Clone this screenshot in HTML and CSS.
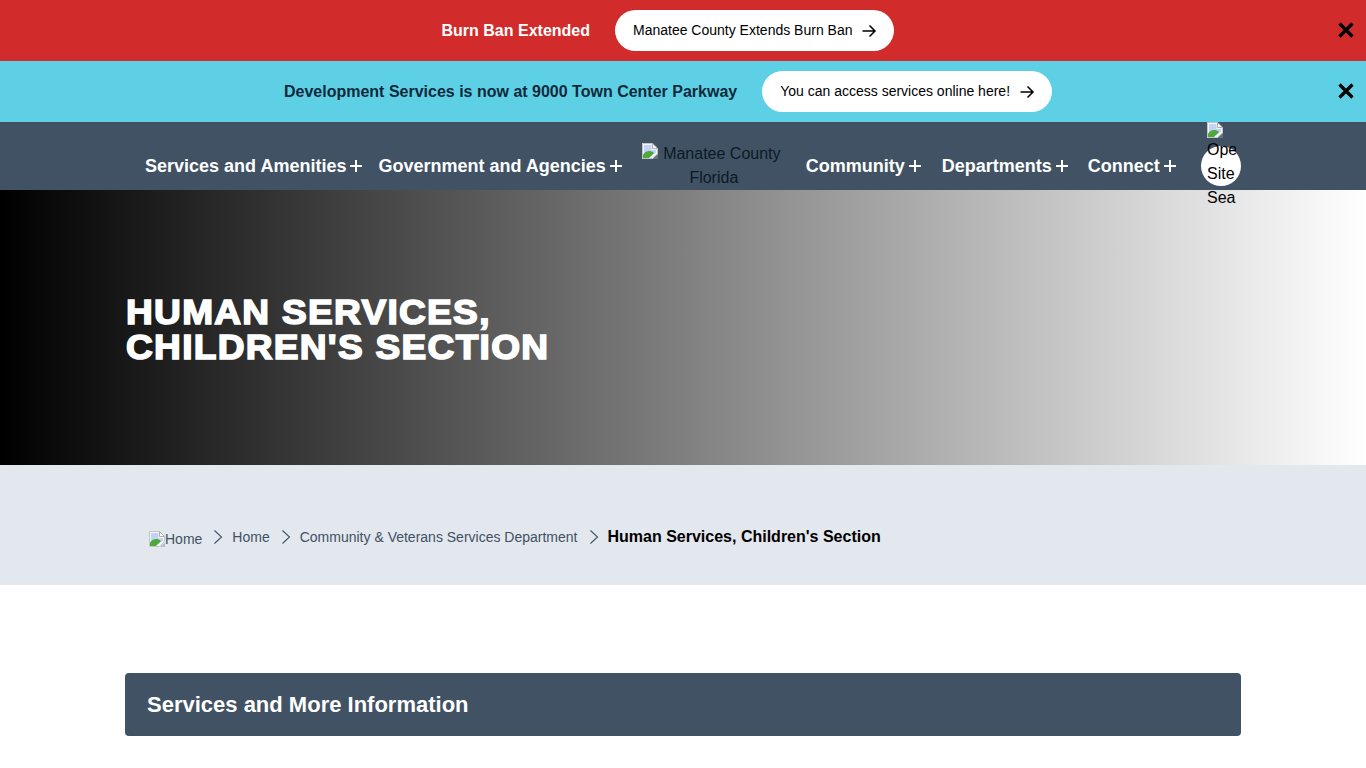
FILE: index.html
```html
<!DOCTYPE html>
<html lang="en">
<head>
<meta charset="utf-8">
<title>Human Services, Children's Section</title>
<link rel="stylesheet" href="styles.css">
</head>
<body>
<svg class="defs" width="0" height="0" aria-hidden="true">
  <symbol id="broken" viewBox="0 0 16 16">
    <path d="M0 0H10.5L16 5.5V11L10.5 16H0Z" fill="#f4f6fb"/>
    <path d="M0.5 0.5H10.5L15.5 5.5V10.8L10.3 15.5H0.5Z" fill="none" stroke="#c4c4c4"/>
    <path d="M10.5 0.5V5.5H15.5Z" fill="#fff" stroke="#b0b0b0"/>
    <path d="M2 2H9.5V7H14V9.5L9.5 13H2Z" fill="#c2d3f5"/>
    <path d="M1 15V11.5C4 7.5 8.5 7 12 10L7 15Z" fill="#4ea83a"/>
    <path d="M11 16L16 11.5V16Z" fill="#8a9a86" opacity=".5"/>
  </symbol>
  <symbol id="arrow" viewBox="0 0 16 16">
    <path d="M1.5 8H14M8.5 2.5L14 8L8.5 13.5" fill="none" stroke="currentColor" stroke-width="1.5"/>
  </symbol>
  <symbol id="close" viewBox="0 0 16 16">
    <path d="M1.5 1.5L14.5 14.5M14.5 1.5L1.5 14.5" fill="none" stroke="currentColor" stroke-width="3.2"/>
  </symbol>
  <symbol id="chev" viewBox="0 0 10 16">
    <path d="M1.5 1.5L8.5 8L1.5 14.5" fill="none" stroke="currentColor" stroke-width="1.1"/>
  </symbol>
</svg>

<section class="alert alert-red">
  <strong class="alert-title">Burn Ban Extended</strong>
  <a class="pill" href="#"><span class="pill-text">Manatee County Extends Burn Ban</span> <svg class="pill-arrow"><use href="#arrow"/></svg></a>
  <button class="alert-close" aria-label="Close"><svg class="close-icon"><use href="#close"/></svg></button>
</section>
<section class="alert alert-blue">
  <strong class="alert-title">Development Services is now at 9000 Town Center Parkway</strong>
  <a class="pill" href="#"><span class="pill-text">You can access services online here!</span> <svg class="pill-arrow"><use href="#arrow"/></svg></a>
  <button class="alert-close" aria-label="Close"><svg class="close-icon"><use href="#close"/></svg></button>
</section>

<header class="site-nav">
  <nav class="nav-inner">
    <a class="nav-link nav-first" href="#">Services and Amenities<span class="plus"></span></a>
    <a class="nav-link nav-second" href="#">Government and Agencies<span class="plus"></span></a>
    <a class="logo" href="#"><span class="logo-line"><svg class="broken logo-icon"><use href="#broken"/></svg>Manatee County</span> Florida</a>
    <a class="nav-link nav-community" href="#">Community<span class="plus"></span></a>
    <a class="nav-link nav-dept" href="#">Departments<span class="plus"></span></a>
    <a class="nav-link nav-connect" href="#">Connect<span class="plus"></span></a>
    <button class="search-btn" aria-label="Open Site Search">
      <span class="search-alt"><svg class="broken broken-block"><use href="#broken"/></svg>Open Site Search</span>
    </button>
  </nav>
</header>

<section class="hero">
  <h1 class="hero-title">Human Services,<br>Children's Section</h1>
</section>

<nav class="crumbs">
  <a class="crumb-home" href="#"><svg class="broken"><use href="#broken"/></svg>Home</a>
  <svg class="chev"><use href="#chev"/></svg>
  <a class="crumb" href="#">Home</a>
  <svg class="chev"><use href="#chev"/></svg>
  <a class="crumb" href="#">Community &amp; Veterans Services Department</a>
  <svg class="chev"><use href="#chev"/></svg>
  <strong class="crumb-current">Human Services, Children's Section</strong>
</nav>

<main class="content">
  <h2 class="panel-head">Services and More Information</h2>
</main>
</body>
</html>
```
FILE: styles.css
```css
* { box-sizing: border-box; }
html, body { margin: 0; padding: 0; }
body {
  font-family: "Liberation Sans", Arial, sans-serif;
  color: #000;
  background: #fff;
  overflow: hidden;
  height: 768px;
}
a { color: inherit; text-decoration: none; }
.defs { position: absolute; }

.alert {
  height: 61px;
  display: flex;
  align-items: center;
  justify-content: center;
  gap: 25px;
  padding-right: 30px;
  position: relative;
}
.alert-red { background: #d12b2b; color: #fff; }
.alert-blue { background: #5ed0e6; color: #10293a; }
.alert-title { font-size: 16px; font-weight: 700; }
.pill {
  height: 41px;
  display: flex;
  align-items: center;
  gap: 9px;
  padding: 0 17px 0 18px;
  background: #fff;
  border-radius: 21px;
  color: #000;
  font-size: 14px;
}
.pill-text { position: relative; top: -1px; }
.pill-arrow { width: 16px; height: 16px; color: #000; }
.alert-close {
  position: absolute;
  right: 12px;
  top: 22px;
  width: 16px;
  height: 16px;
  padding: 0;
  border: 0;
  background: none;
  color: #000;
  display: block;
}
.close-icon { width: 16px; height: 16px; display: block; }

.site-nav { height: 68px; background: #415264; }
.nav-inner {
  height: 68px;
  padding-left: 145px;
  display: flex;
  align-items: center;
  position: relative;
}
.nav-link {
  display: flex;
  align-items: center;
  color: #fff;
  font-size: 18px;
  font-weight: 700;
  padding-top: 20px;
  height: 68px;
}
.plus {
  width: 12px;
  height: 12px;
  margin-left: 4px;
  background:
    linear-gradient(#fff, #fff) center / 100% 2px no-repeat,
    linear-gradient(#fff, #fff) center / 2px 100% no-repeat;
}
.nav-second { margin-left: 16px; }
.logo {
  width: 144px;
  margin-left: 20px;
  height: 68px;
  padding-top: 20px;
  text-align: center;
  font-size: 16px;
  line-height: 24px;
  color: #0b1a26;
}
.logo-line { margin-right: 5px; }
.logo-icon { margin-right: 5px; }
.broken { width: 16px; height: 16px; }
.nav-community { margin-left: 20px; }
.nav-dept { margin-left: 21px; }
.nav-connect { margin-left: 20px; }
.search-btn {
  position: absolute;
  left: 1201px;
  top: 24px;
  width: 40px;
  height: 40px;
  border: 0;
  padding: 0;
  border-radius: 50%;
  background: #fff;
}
.search-alt {
  position: absolute;
  left: 6px;
  top: -24px;
  width: 29px;
  height: 86px;
  overflow: hidden;
  text-align: left;
  font: 16px/24px "Liberation Sans", Arial, sans-serif;
  color: #000;
  z-index: 2;
}
.broken-block { display: block; }

.hero {
  height: 275px;
  background: linear-gradient(to right, #000, #fff);
  padding: 104px 0 0 126px;
}
.hero-title {
  margin: 0;
  width: fit-content;
  color: #fff;
  font-family: "Liberation Sans", Arial, sans-serif;
  font-size: 35px;
  line-height: 35px;
  font-weight: 700;
  text-transform: uppercase;
  letter-spacing: 1.2px;
  -webkit-text-stroke: 1.6px #fff;
  transform: scaleX(1.06);
  transform-origin: left center;
}

.crumbs {
  height: 120px;
  background: #e3e7ee;
  padding: 24px 0 0 149px;
  display: flex;
  align-items: center;
  gap: 0;
  color: #415264;
  font-size: 14px;
}
.crumb-home { display: flex; align-items: flex-end; color: #415264; margin-top: 4px; }
.crumb-home .broken { flex: none; }
.chev { width: 10px; height: 16px; margin: 0 9px 0 11px; flex: none; color: #415264; }
.crumb-current { font-size: 16px; color: #000; }

.content { padding: 88px 125px 0; }
.panel-head {
  margin: 0;
  height: 63px;
  background: #415264;
  border-radius: 4px;
  color: #fff;
  font-size: 22px;
  font-weight: 700;
  padding: 0 22px;
  display: flex;
  align-items: center;
}
```
